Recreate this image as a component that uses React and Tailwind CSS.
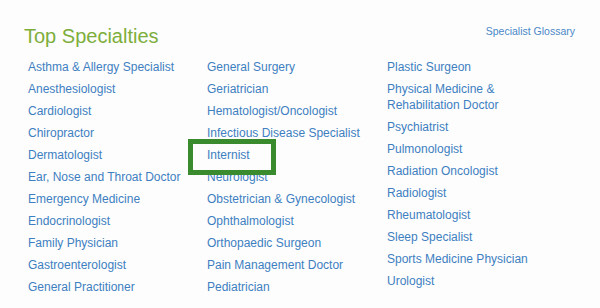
import React from 'react';

const columns = [
  [
    'Asthma & Allergy Specialist',
    'Anesthesiologist',
    'Cardiologist',
    'Chiropractor',
    'Dermatologist',
    'Ear, Nose and Throat Doctor',
    'Emergency Medicine',
    'Endocrinologist',
    'Family Physician',
    'Gastroenterologist',
    'General Practitioner',
  ],
  [
    'General Surgery',
    'Geriatrician',
    'Hematologist/Oncologist',
    'Infectious Disease Specialist',
    'Internist',
    'Neurologist',
    'Obstetrician & Gynecologist',
    'Ophthalmologist',
    'Orthopaedic Surgeon',
    'Pain Management Doctor',
    'Pediatrician',
  ],
  [
    'Plastic Surgeon',
    'Physical Medicine & Rehabilitation Doctor',
    'Psychiatrist',
    'Pulmonologist',
    'Radiation Oncologist',
    'Radiologist',
    'Rheumatologist',
    'Sleep Specialist',
    'Sports Medicine Physician',
    'Urologist',
  ],
];

const App = () => {
  return (
    <div className="w-[600px] h-[308px] bg-[#fdfdfd] overflow-hidden font-['Liberation_Sans',Arial,sans-serif] px-6 pt-6">
      {/* Header */}
      <div className="flex items-start justify-between">
        <h2 className="text-[20px] leading-6 text-[#7dae3c]">Top Specialties</h2>
        <a className="text-[10.5px] leading-4 text-[#4a88c8] mt-[-1px] mr-[1px]">Specialist Glossary</a>
      </div>

      {/* Specialty list */}
      <div className="grid grid-cols-[179px_180px_170px] mt-[11px] ml-1">
        {columns.map((col, i) => (
          <ul key={i} className="flex flex-col gap-[6px]">
            {col.map((name) => (
              <li key={name} className="text-[12px] leading-4 text-[#3d7fc1]">
                {name === 'Internist' ? (
                  <span className="relative">
                    {name}
                    <span className="absolute left-[-19px] top-[-9px] w-[88px] h-[36px] border-[5px] border-[#3a8a2e]" />
                  </span>
                ) : (
                  name
                )}
              </li>
            ))}
          </ul>
        ))}
      </div>
    </div>
  );
};

export default App;
